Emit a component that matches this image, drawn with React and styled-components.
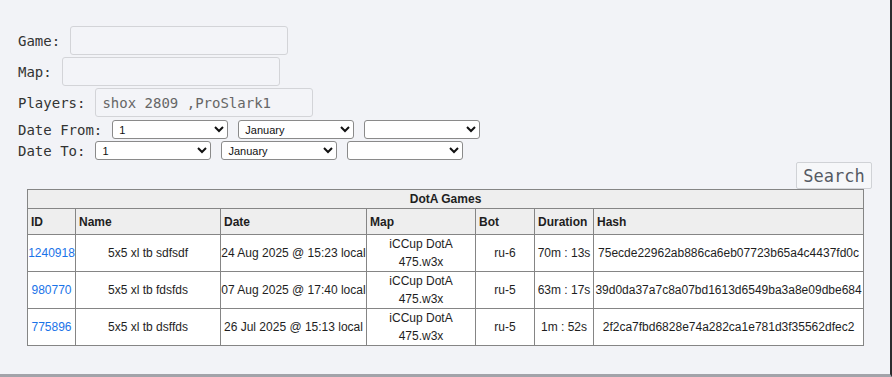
import React from "react";
import styled, { createGlobalStyle } from "styled-components";

const GlobalStyle = createGlobalStyle`
  html, body {
    margin: 0;
    padding: 0;
    background: #f2f3f7;
  }
`;

const Frame = styled.div`
  width: 892px;
  height: 377px;
  box-sizing: border-box;
  border-right: 2px solid #2b2b2e;
  border-bottom: 3px solid #a2a3a9;
  background: #f2f3f7;
`;

const Page = styled.div`
  padding: 26px 18px 0 18px;
  font-family: "DejaVu Sans Mono", "Liberation Mono", monospace;
  color: #333;
`;

const Field = styled.div`
  display: flex;
  align-items: center;
  gap: 10px;
  margin-bottom: ${(p) => p.$space || 2}px;
  font-size: 14px;
`;

const Label = styled.label`
  white-space: pre;
`;

const TextInput = styled.input`
  width: 218px;
  height: 29px;
  box-sizing: border-box;
  border: 1px solid #d3d4d8;
  border-radius: 3px;
  background: #f3f4f8;
  padding: 0 6px;
  font-family: "DejaVu Sans Mono", "Liberation Mono", monospace;
  font-size: 14px;
  line-height: 20px;
  color: #666;
  outline: none;
`;

const Select = styled.select`
  width: 116px;
  height: 19px;
  font-family: "Liberation Sans", Arial, sans-serif;
  font-size: 11px;
  color: #111;
  background: #fff;
  border: 1px solid #8a8a8a;
  border-radius: 3px;
  padding: 0 2px;
`;

const ButtonRow = styled.div`
  display: flex;
  justify-content: flex-end;
  margin-top: 2px;
`;

const SearchButton = styled.button`
  height: 27px;
  width: 76px;
  padding: 0;
  border: 1px solid #d0d2d6;
  border-radius: 2px;
  background: #f6f7f9;
  color: #555a63;
  font-family: "DejaVu Sans Mono", "Liberation Mono", monospace;
  font-size: 17px;
`;

const Table = styled.table`
  margin-left: 9px;
  width: 836px;
  table-layout: fixed;
  border-collapse: collapse;
  font-family: "Liberation Sans", Arial, sans-serif;
  font-size: 12px;
  color: #1e1e1e;
  background: #fff;
`;

const Caption = styled.th`
  background: #eeeeee;
  border: 1px solid #858585;
  height: 18px;
  padding: 0;
  font-weight: bold;
  text-align: center;
`;

const Head = styled.th`
  background: #eeeeee;
  border: 1px solid #858585;
  height: 25px;
  padding: 0 3px;
  text-align: left;
  font-weight: bold;
  white-space: nowrap;
`;

const Cell = styled.td`
  border: 1px solid #858585;
  height: 36px;
  padding: 0;
  text-align: center;
  line-height: 18px;
  white-space: ${(p) => (p.$wrap ? "normal" : "nowrap")};
  overflow: hidden;
`;

const IdLink = styled.a`
  color: #1a73e8;
  text-decoration: none;
`;

const columns = [
  { title: "ID", width: 48 },
  { title: "Name", width: 145 },
  { title: "Date", width: 146 },
  { title: "Map", width: 109 },
  { title: "Bot", width: 59 },
  { title: "Duration", width: 59 },
  { title: "Hash", width: 270 },
];

const games = [
  {
    id: "1240918",
    name: "5x5 xl tb sdfsdf",
    date: "24 Aug 2025 @ 15:23 local",
    map: "iCCup DotA 475.w3x",
    bot: "ru-6",
    duration: "70m : 13s",
    hash: "75ecde22962ab886ca6eb07723b65a4c4437fd0c",
  },
  {
    id: "980770",
    name: "5x5 xl tb fdsfds",
    date: "07 Aug 2025 @ 17:40 local",
    map: "iCCup DotA 475.w3x",
    bot: "ru-5",
    duration: "63m : 17s",
    hash: "39d0da37a7c8a07bd1613d6549ba3a8e09dbe684",
  },
  {
    id: "775896",
    name: "5x5 xl tb dsffds",
    date: "26 Jul 2025 @ 15:13 local",
    map: "iCCup DotA 475.w3x",
    bot: "ru-5",
    duration: "1m : 52s",
    hash: "2f2ca7fbd6828e74a282ca1e781d3f35562dfec2",
  },
];

const DateSelects = () => (
  <>
    <Select defaultValue="1">
      <option value="1">1</option>
    </Select>
    <Select defaultValue="January">
      <option value="January">January</option>
    </Select>
    <Select defaultValue="">
      <option value=""></option>
    </Select>
  </>
);

export default function App() {
  return (
    <Frame>
      <GlobalStyle />
      <Page>
        <Field>
          <Label>Game:</Label>
          <TextInput />
        </Field>
        <Field>
          <Label>Map:</Label>
          <TextInput />
        </Field>
        <Field $space={3}>
          <Label>Players:</Label>
          <TextInput defaultValue="shox_2809 ,ProSlark1" />
        </Field>
        <Field $space={2}>
          <Label>Date From:</Label>
          <DateSelects />
        </Field>
        <Field $space={0}>
          <Label>Date To:</Label>
          <DateSelects />
        </Field>
        <ButtonRow>
          <SearchButton>Search</SearchButton>
        </ButtonRow>
        <Table>
          <colgroup>
            {columns.map((c) => (
              <col key={c.title} style={{ width: c.width }} />
            ))}
          </colgroup>
          <thead>
            <tr>
              <Caption colSpan={columns.length}>DotA Games</Caption>
            </tr>
            <tr>
              {columns.map((c) => (
                <Head key={c.title}>{c.title}</Head>
              ))}
            </tr>
          </thead>
          <tbody>
            {games.map((g) => (
              <tr key={g.id}>
                <Cell>
                  <IdLink href="#">{g.id}</IdLink>
                </Cell>
                <Cell>{g.name}</Cell>
                <Cell>{g.date}</Cell>
                <Cell $wrap>{g.map}</Cell>
                <Cell>{g.bot}</Cell>
                <Cell>{g.duration}</Cell>
                <Cell>{g.hash}</Cell>
              </tr>
            ))}
          </tbody>
        </Table>
      </Page>
    </Frame>
  );
}
